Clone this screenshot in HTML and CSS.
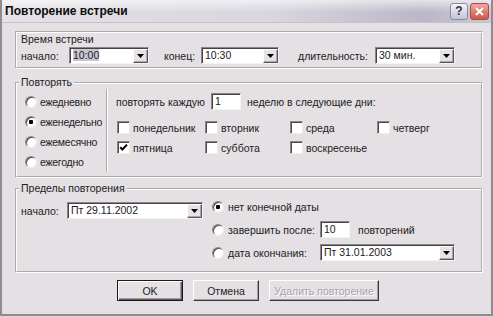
FILE: index.html
```html
<!DOCTYPE html>
<html lang="ru">
<head>
<meta charset="utf-8">
<title>Повторение встречи</title>
<link rel="stylesheet" href="styles.css">
</head>
<body>
<div class="window">
  <div class="titlebar">
    <span class="title">Повторение встречи</span>
    <span class="tb help">?</span>
    <span class="tb close"><svg width="9" height="9" viewBox="0 0 9 9"><path d="M1 1l7 7M8 1l-7 7" stroke="#fff" stroke-width="1.9"/></svg></span>
  </div>
  <div class="body">
    <div class="group g-time">
      <div class="caption">Время встречи</div>
      <div class="row">
        <span class="lbl w48">начало:</span>
        <div class="combo w80"><span class="ctext"><span class="sel">10:00</span></span><span class="drop"><svg width="7" height="4" viewBox="0 0 7 4"><path d="M0 0h7L3.5 4z"/></svg></span></div>
        <span class="lbl w37 ml15">конец:</span>
        <div class="combo w78"><span class="ctext">10:30</span><span class="drop"><svg width="7" height="4" viewBox="0 0 7 4"><path d="M0 0h7L3.5 4z"/></svg></span></div>
        <span class="lbl w77 ml19">длительность:</span>
        <div class="combo w80"><span class="ctext">30 мин.</span><span class="drop"><svg width="7" height="4" viewBox="0 0 7 4"><path d="M0 0h7L3.5 4z"/></svg></span></div>
      </div>
    </div>

    <fieldset class="group g-repeat">
      <legend>Повторять</legend>
      <div class="repeat-cols">
        <div class="freq">
          <div class="opt"><span class="radio"></span><span>ежедневно</span></div>
          <div class="opt"><span class="radio on"></span><span>еженедельно</span></div>
          <div class="opt"><span class="radio"></span><span>ежемесячно</span></div>
          <div class="opt"><span class="radio"></span><span>ежегодно</span></div>
        </div>
        <div class="weekly">
          <div class="row every">
            <span class="lbl w95">повторять каждую</span>
            <span class="field w30">1</span>
            <span class="lbl ml6">неделю в следующие дни:</span>
          </div>
          <div class="days">
            <div class="day"><span class="check"></span><span>понедельник</span></div>
            <div class="day"><span class="check"></span><span>вторник</span></div>
            <div class="day"><span class="check"></span><span>среда</span></div>
            <div class="day"><span class="check"></span><span>четверг</span></div>
            <div class="day"><span class="check"><svg width="9" height="9" viewBox="0 0 9 9"><path d="M1.2 4.2l2.2 2.3L8 1.6" stroke="#000" stroke-width="2" fill="none"/></svg></span><span>пятница</span></div>
            <div class="day"><span class="check"></span><span>суббота</span></div>
            <div class="day"><span class="check"></span><span>воскресенье</span></div>
          </div>
        </div>
      </div>
    </fieldset>

    <fieldset class="group g-range">
      <legend>Пределы повторения</legend>
      <div class="range-cols">
        <div class="row start">
          <span class="lbl w46">начало:</span>
          <div class="combo w136"><span class="ctext">Пт 29.11.2002</span><span class="drop"><svg width="7" height="4" viewBox="0 0 7 4"><path d="M0 0h7L3.5 4z"/></svg></span></div>
        </div>
        <div class="ends">
          <div class="end-row"><span class="radio on"></span><span class="lbl">нет конечной даты</span></div>
          <div class="end-row"><span class="radio"></span><span class="lbl w92">завершить после:</span><span class="field w30">10</span><span class="lbl ml8">повторений</span></div>
          <div class="end-row"><span class="radio"></span><span class="lbl w92">дата окончания:</span><div class="combo w135"><span class="ctext">Пт 31.01.2003</span><span class="drop"><svg width="7" height="4" viewBox="0 0 7 4"><path d="M0 0h7L3.5 4z"/></svg></span></div></div>
        </div>
      </div>
    </fieldset>

    <div class="buttons">
      <span class="btn default w66">OK</span>
      <span class="btn w66">Отмена</span>
      <span class="btn disabled w110">Удалить повторение</span>
    </div>
  </div>
</div>
</body>
</html>
```
FILE: styles.css
```css
* { box-sizing: border-box; }
html, body { margin: 0; padding: 0; }
body {
  width: 493px;
  height: 317px;
  overflow: hidden;
  background: #dcd8dc;
  font-family: "Liberation Sans", Arial, sans-serif;
  font-size: 10.5px;
  color: #222022;
}
.window {
  width: 493px;
  height: 316px;
  background: #e4e0e4;
  border: 2px solid #8f8b91;
  border-top: 0;
  display: flex;
  flex-direction: column;
}
.titlebar {
  height: 23px;
  flex: none;
  display: flex;
  align-items: center;
  padding: 0 2px 0 3px;
  background:
    linear-gradient(to bottom, rgba(255,255,255,.6), rgba(255,255,255,0) 55%),
    linear-gradient(to right, #e4e2e8, #d8d6de 55%, #bab8c8 86%, #cac8d4);
  border-bottom: 1px solid #c6c2c8;
}
.title {
  flex: 1;
  font-weight: bold;
  font-size: 12px;
  color: #0c0c0c;
}
.tb {
  width: 18px;
  height: 17px;
  border-radius: 3px;
  display: flex;
  align-items: center;
  justify-content: center;
}
.help {
  margin-right: 2px;
  border: 1px solid #8a8aa4;
  background: linear-gradient(#f4f4f8, #c4c4d4);
  font-weight: bold;
  font-size: 12px;
  color: #30304a;
}
.close {
  width: 19px;
  border: 1px solid #a84c44;
  background: linear-gradient(#f0a8a0, #d0584a);
}
.body {
  flex: 1;
  padding: 8px 8px 0 13px;
  display: flex;
  flex-direction: column;
}
.group {
  border: 2px groove #ffffff;
  margin: 0;
  padding: 0;
  min-width: 0;
}
.group legend {
  padding: 0 2px;
  margin-left: 2px;
  line-height: 13px;
}
.g-time {
  height: 38px;
  padding: 0 0 0 4px;
}
.caption { line-height: 13px; }
.row { display: flex; align-items: center; }
.g-time .row { margin-top: 1px; }
.lbl { white-space: nowrap; flex: none; }
.w30 { width: 30px; }
.w37 { width: 37px; }
.w46 { width: 46px; }
.w48 { width: 48px; }
.w66 { width: 66px; }
.w77 { width: 77px; }
.w78 { width: 78px; }
.w80 { width: 80px; }
.w92 { width: 92px; }
.w95 { width: 95px; }
.w110 { width: 110px; }
.w135 { width: 135px; }
.w136 { width: 136px; }
.ml6 { margin-left: 6px; }
.ml8 { margin-left: 8px; }
.ml15 { margin-left: 15px; }
.ml19 { margin-left: 19px; }

.combo, .field {
  height: 17px;
  flex: none;
  background: #fff;
  border: 1px solid;
  border-color: #8a868c #f4f2f4 #f4f2f4 #8a868c;
  box-shadow: inset 1px 1px 0 #454245;
}
.combo { display: flex; }
.ctext {
  flex: 1;
  padding: 1px 0 0 3px;
  line-height: 13px;
  white-space: nowrap;
  overflow: hidden;
}
.sel { background: #c9c5d3; }
.field {
  padding: 1px 0 0 3px;
  line-height: 13px;
}
.drop {
  width: 15px;
  margin: 1px 0 0 0;
  flex: none;
  display: flex;
  align-items: center;
  justify-content: center;
  background: #e6e2e6;
  border: 1px solid;
  border-color: #ffffff #5a565c #5a565c #ffffff;
  box-shadow: inset -1px -1px 0 #aaa6ac;
}
.drop svg { fill: #000; }

.g-repeat {
  margin-top: 7px;
  height: 102px;
}
.repeat-cols { display: flex; height: 100%; }
.freq {
  width: 91px;
  flex: none;
  border-right: 2px groove #ffffff;
  padding: 3px 0 0 8px;
}
.opt {
  height: 20px;
  display: flex;
  align-items: center;
  gap: 3px;
  letter-spacing: -0.25px;
  white-space: nowrap;
}
.radio {
  width: 12px;
  height: 12px;
  flex: none;
  border-radius: 50%;
  border: 1px solid;
  border-color: #8a868c #eeeaee #eeeaee #8a868c;
  background: #fff;
  box-shadow: inset 1px 1px 0 #4a474a;
}
.radio.on {
  background: radial-gradient(circle at 50% 50%, #000 0 2px, #fff 2.5px);
}
.weekly {
  flex: 1;
  padding: 4px 0 0 8px;
}
.days {
  margin: 11px 0 0 1px;
  display: grid;
  grid-template-columns: 88px 85px 87px auto;
  row-gap: 7px;
}
.day {
  height: 13px;
  display: flex;
  align-items: center;
  gap: 3px;
  white-space: nowrap;
}
.check {
  width: 13px;
  height: 13px;
  flex: none;
  display: flex;
  align-items: center;
  justify-content: center;
  background: #fff;
  border: 1px solid;
  border-color: #8a868c #eeeaee #eeeaee #8a868c;
  box-shadow: inset 1px 1px 0 #4a474a;
}

.g-range {
  margin-top: 4px;
  height: 91px;
}
.range-cols {
  display: flex;
  padding-left: 4px;
}
.start { margin-top: 7px; align-self: flex-start; }
.ends {
  margin-left: 9px;
  padding-top: 2px;
  display: flex;
  flex-direction: column;
  gap: 4px;
}
.end-row {
  height: 19px;
  display: flex;
  align-items: center;
}
.end-row .radio { margin-right: 4px; }

.buttons {
  margin: 7px 0 0 102px;
  display: flex;
  gap: 10px;
}
.btn {
  height: 21px;
  display: flex;
  align-items: center;
  justify-content: center;
  background: #e4e0e4;
  border: 1px solid;
  border-color: #ffffff #3e3b3e #3e3b3e #ffffff;
  box-shadow: inset -1px -1px 0 #a29ea4;
  white-space: nowrap;
}
.btn.default {
  border: 1px solid #1a181a;
  box-shadow: inset 1px 1px 0 #ffffff, inset -1px -1px 0 #5a565c, inset -2px -2px 0 #a29ea4;
}
.btn.disabled {
  color: #a6a2a8;
  text-shadow: 1px 1px 0 #ffffff;
}
```
